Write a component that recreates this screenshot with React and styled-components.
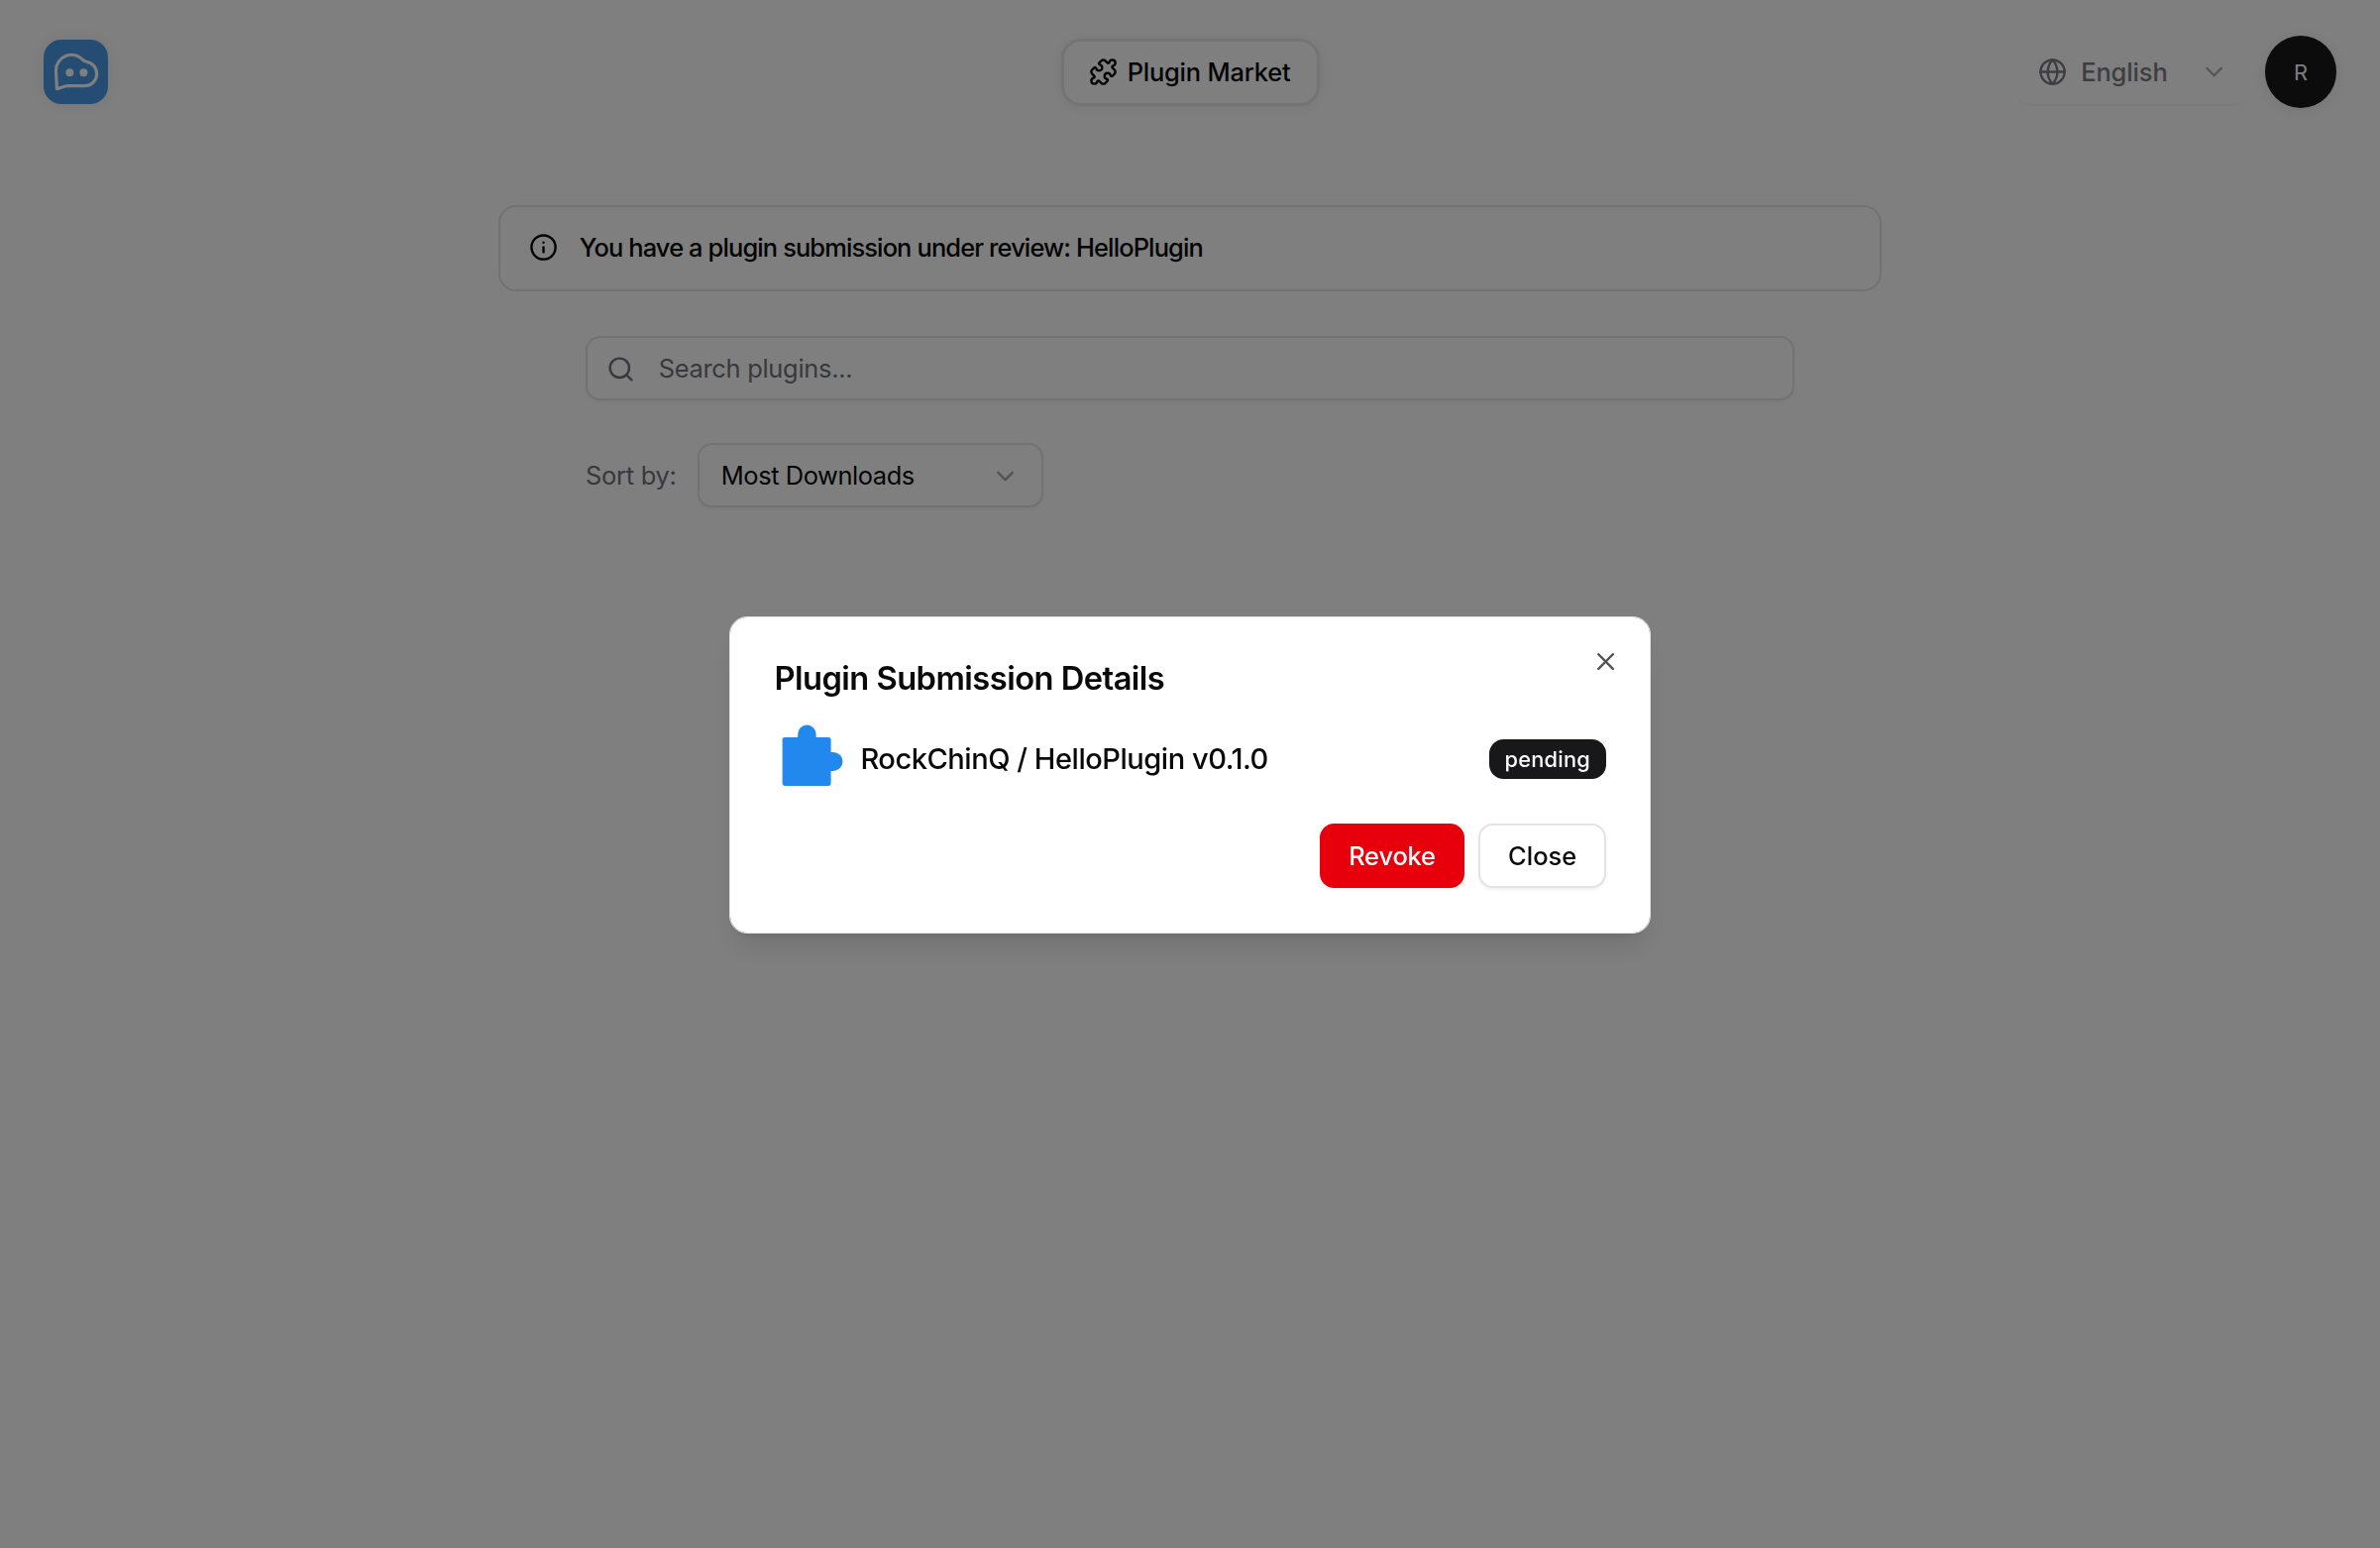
import React from "react";
import styled, { createGlobalStyle } from "styled-components";
import { ChevronDown, Globe, Info, Puzzle, Search, X } from "lucide-react";

const GlobalStyle = createGlobalStyle`
  *, *::before, *::after { box-sizing: border-box; }
  body {
    margin: 0;
    background: #ffffff;
    color: #09090b;
    font-family: Inter, "Liberation Sans", sans-serif;
    font-size: 25.43px;
    overflow: hidden;
  }
  button { font: inherit; color: inherit; }
  svg { display: block; flex: none; }
`;

const Page = styled.div`
  height: 1562px;
  display: flex;
  flex-direction: column;
`;

const Label = styled.span`
  white-space: pre;
  font-size: ${(p) => p.$size || 25.43}px;
  font-weight: ${(p) => p.$weight || 400};
  letter-spacing: ${(p) => p.$tracking || 0}px;
  line-height: 36px;
`;

const Header = styled.header`
  display: grid;
  grid-template-columns: 1fr auto 1fr;
  align-items: center;
  height: 145px;
  padding: 0 43.6px;
`;

const LogoBox = styled.div`
  width: 65.4px;
  height: 65.4px;
  border-radius: 18px;
  background: #4a9ae8;
  box-shadow: 0 0 18px rgba(0, 0, 0, 0.08);
`;

const MarketTab = styled.button`
  display: flex;
  align-items: center;
  gap: 9.5px;
  width: 261px;
  height: 68px;
  padding: 0 0 0 25.6px;
  border: 3px solid #e9e9e9;
  border-radius: 20px;
  background: #ffffff;
  box-shadow: 0 2px 14px rgba(0, 0, 0, 0.07);
`;

const HeaderEnd = styled.div`
  display: flex;
  align-items: center;
  justify-content: flex-end;
  gap: 14.5px;
`;

const LanguageSelect = styled.button`
  display: flex;
  align-items: center;
  width: 237px;
  height: 65.4px;
  padding: 1px 21.8px 0 22.8px;
  gap: 14px;
  border: 0;
  border-radius: 14.5px;
  background: transparent;
  color: #7c7c84;
  box-shadow: 0 1.8px 3px -1px rgba(0, 0, 0, 0.06);
  svg:last-child { margin-left: auto; opacity: 0.6; }
`;

const Avatar = styled.div`
  display: grid;
  place-items: center;
  width: 72.6px;
  height: 72.6px;
  border-radius: 50%;
  background: #18181a;
  color: #fafafa;
  box-shadow: 0 2px 16px rgba(0, 0, 0, 0.09);
`;

const Main = styled.main`
  display: flex;
  flex-direction: column;
  align-items: center;
  padding-top: 62px;
`;

const Notice = styled.section`
  display: flex;
  align-items: flex-start;
  gap: 21.8px;
  width: 1396px;
  height: 87px;
  padding: 23px 29px 0;
  border: 2px solid #e4e4e7;
  border-radius: 18px;
  svg { margin-top: 3px; }
`;

const Tools = styled.section`
  display: flex;
  flex-direction: column;
  gap: 43.6px;
  width: 1220px;
  margin-top: 44.8px;
`;

const SearchField = styled.div`
  display: flex;
  align-items: center;
  gap: 24px;
  height: 65px;
  padding: 1.6px 18.6px 0;
  border: 2px solid #e4e4e7;
  border-radius: 14.5px;
  color: #71717a;
  box-shadow: 0 1.8px 3.6px rgba(0, 0, 0, 0.05);
`;

const SortRow = styled.div`
  display: flex;
  align-items: center;
  justify-content: space-between;
  width: 462px;
  color: #71717a;
`;

const SortSelect = styled.button`
  display: flex;
  align-items: center;
  justify-content: space-between;
  width: 349px;
  height: 65px;
  padding: 1px 21.8px 0 21.8px;
  border: 2px solid #e4e4e7;
  border-radius: 14.5px;
  background: #ffffff;
  color: #09090b;
  box-shadow: 0 1.8px 3.6px rgba(0, 0, 0, 0.05);
  svg { color: #71717a; opacity: 0.6; }
`;

const Backdrop = styled.div`
  position: fixed;
  inset: 0;
  display: flex;
  align-items: center;
  justify-content: center;
  background: rgba(0, 0, 0, 0.5);
`;

const Dialog = styled.section`
  position: relative;
  display: flex;
  flex-direction: column;
  gap: 29px;
  width: 930px;
  height: 320px;
  padding: 45px 44px 0 44.4px;
  border: 1px solid #e4e4e7;
  border-radius: 18px;
  background: #ffffff;
  background-clip: padding-box;
  margin-top: 1px;
  box-shadow: 0 18px 27px -5px rgba(0, 0, 0, 0.1), 0 7px 11px -7px rgba(0, 0, 0, 0.1);
`;

const DismissButton = styled.button`
  position: absolute;
  top: 30.4px;
  right: 30px;
  padding: 0;
  border: 0;
  background: none;
  color: #09090b;
  opacity: 0.7;
`;

const DialogTitle = styled.h2`
  margin: 0;
  font-size: 32.7px;
  font-weight: 600;
  letter-spacing: -0.55px;
  line-height: 32.7px;
`;

const Submission = styled.div`
  display: flex;
  align-items: center;
  gap: 14.4px;
  height: 72.6px;
`;

const Badge = styled.span`
  display: grid;
  place-items: center;
  width: 118.4px;
  height: 40px;
  margin-left: auto;
  border-radius: 14.5px;
  background: #18181b;
  color: #fafafa;
`;

const Actions = styled.footer`
  display: flex;
  justify-content: flex-end;
  gap: 14.5px;
`;

const ActionButton = styled.button`
  width: ${(p) => (p.$danger ? 145.4 : 128.8)}px;
  height: 65.4px;
  padding: 1px 0 0;
  border: ${(p) => (p.$danger ? "0" : "2px solid #e4e4e7")};
  border-radius: 14.5px;
  background: ${(p) => (p.$danger ? "#e7000b" : "#ffffff")};
  color: ${(p) => (p.$danger ? "#ffffff" : "#09090b")};
  box-shadow: 0 1.8px 3.6px rgba(0, 0, 0, 0.06);
`;

const Logo = () => (
  <LogoBox>
    <svg width="65.4" height="65.4" viewBox="0 0 196 196" fill="none">
      <path
        d="M40 149 C40 132 37.5 108 37.5 92 A47 47 0 0 1 120 62 Q125 67 132 67.5 A36.5 36.5 0 0 1 128 139.500 H76 C62 140 53 146 40 149 Z"
        stroke="#fff"
        strokeWidth="9.500"
        strokeLinejoin="round"
      />
      <circle cx="79" cy="100" r="12" fill="#fff" />
      <circle cx="121" cy="100" r="12" fill="#fff" />
    </svg>
  </LogoBox>
);

const PluginIcon = () => (
  <svg width="72.6" height="72.6" viewBox="0 0 72.6 72.6" fill="#2288ee">
    <rect x="8.6" y="14.9" width="49" height="49" rx="2.4" />
    <path d="M24.2 16 V11.8 A9.2 9.2 0 0 1 42.6 11.8 V16 Z" />
    <path d="M56 29.9 H60 A9.5 9.5 0 0 1 60 48.9 H56 Z" />
  </svg>
);

export default function App() {
  return (
    <>
      <GlobalStyle />
      <Page>
        <Header>
          <Logo />
          <MarketTab>
            <Puzzle size={29.07} />
            <Label $weight={500} $tracking={-0.2}>Plugin Market</Label>
          </MarketTab>
          <HeaderEnd>
            <LanguageSelect>
              <Globe size={29.07} />
              <Label $weight={500} $tracking={-0.1}>English</Label>
              <ChevronDown size={29.07} />
            </LanguageSelect>
            <Avatar>
              <Label $size={21.8}>R</Label>
            </Avatar>
          </HeaderEnd>
        </Header>
        <Main>
          <Notice>
            <Info size={29.07} />
            <Label $weight={500} $tracking={-0.87}>
              You have a plugin submission under review: HelloPlugin
            </Label>
          </Notice>
          <Tools>
            <SearchField>
              <Search size={29.07} />
              <Label $tracking={-0.28}>Search plugins...</Label>
            </SearchField>
            <SortRow>
              <Label $tracking={-0.25}>Sort by:</Label>
              <SortSelect>
                <Label $tracking={-0.42}>Most Downloads</Label>
                <ChevronDown size={29.07} />
              </SortSelect>
            </SortRow>
          </Tools>
        </Main>
      </Page>
      <Backdrop>
        <Dialog role="dialog">
          <DialogTitle>Plugin Submission Details</DialogTitle>
          <Submission>
            <PluginIcon />
            <Label $size={29.07} $weight={500} $tracking={-0.48}>
              RockChinQ / HelloPlugin v0.1.0
            </Label>
            <Badge>
              <Label $size={21.8} $weight={500} $tracking={0.2}>pending</Label>
            </Badge>
          </Submission>
          <Actions>
            <ActionButton $danger>
              <Label $weight={500} $tracking={-0.15}>Revoke</Label>
            </ActionButton>
            <ActionButton>
              <Label $weight={500}>Close</Label>
            </ActionButton>
          </Actions>
          <DismissButton aria-label="Close">
            <X size={29.07} />
          </DismissButton>
        </Dialog>
      </Backdrop>
    </>
  );
}
